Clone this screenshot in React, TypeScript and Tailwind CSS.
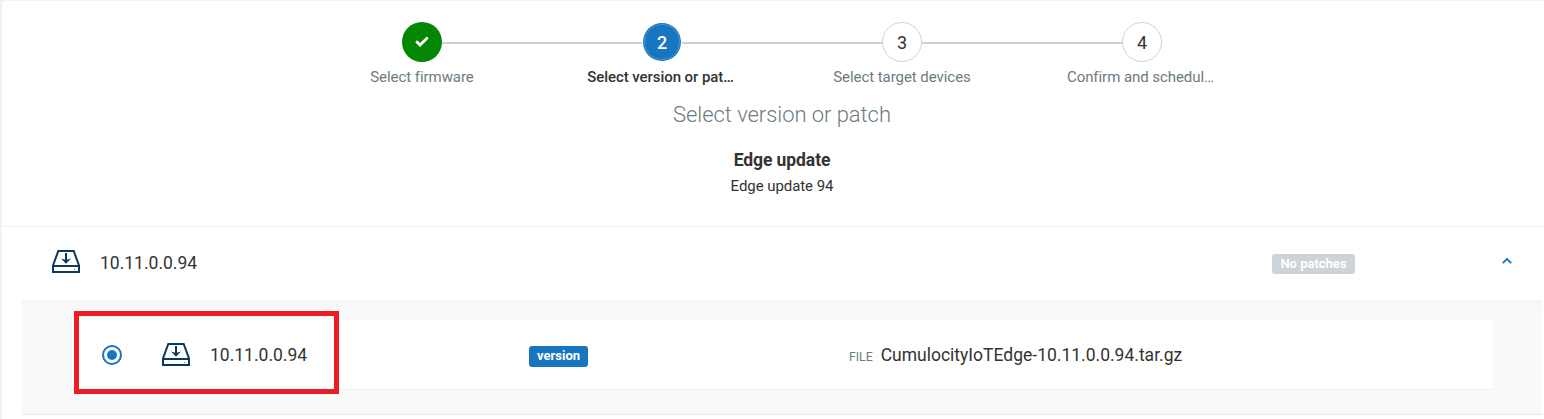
type StepState = "done" | "active" | "todo";

const steps: { label: string; state: StepState; clipped?: boolean }[] = [
  { label: "Select firmware", state: "done" },
  { label: "Select version or pat…", state: "active", clipped: true },
  { label: "Select target devices", state: "todo" },
  { label: "Confirm and schedul…", state: "todo", clipped: true },
];

function StepCircle({ index, state }: { index: number; state: StepState }) {
  if (state === "done") {
    return (
      <div className="flex size-10 items-center justify-center rounded-full bg-[#048804]">
        <svg className="h-3 w-[14px]" viewBox="0 0 14 12" fill="none">
          <path d="M1.2 5.3L5 9L12.7 1.5" stroke="white" strokeWidth="2.7" />
        </svg>
      </div>
    );
  }
  if (state === "active") {
    return (
      <div className="flex size-10 items-center justify-center rounded-full bg-white p-px">
        <div className="flex size-full items-center justify-center rounded-full bg-[#1776bf] p-px">
          <div className="flex size-full items-center justify-center rounded-full border border-[#4a94cf] text-[18px] font-medium text-white">
            {index}
          </div>
        </div>
      </div>
    );
  }
  return (
    <div className="flex size-10 items-center justify-center rounded-full border border-[#ced3d8] bg-white text-[18px] text-[#333]">
      {index}
    </div>
  );
}

function Stepper() {
  return (
    <ol className="mx-auto flex w-[960px]">
      {steps.map((step, i) => (
        <li key={step.label} className="flex w-60 flex-col items-center">
          <div className="flex w-full items-center">
            <div className={`mt-px h-0.5 flex-1 ${i > 0 ? "bg-[#ced3d8]" : ""}`} />
            <StepCircle index={i + 1} state={step.state} />
            <div className={`mt-px h-0.5 flex-1 ${i < steps.length - 1 ? "bg-[#ced3d8]" : ""}`} />
          </div>
          <span
            className={`mt-1 text-[15px] leading-[22px] ${step.clipped ? "pr-[3px]" : ""} ${
              step.state === "active"
                ? "font-medium tracking-[-0.06px] text-[#333]"
                : "tracking-[-0.06px] text-[#6c7b80]"
            }`}
          >
            {step.label}
          </span>
        </li>
      ))}
    </ol>
  );
}

function DriveIcon() {
  return (
    <svg className="h-[23px] w-7 shrink-0" viewBox="0 0 28 23" fill="none">
      <path d="M6.3 1H21.7L27 15.5V22H1V15.5Z" stroke="#0b385b" strokeWidth="2" />
      <path d="M1 16H27" stroke="#0b385b" strokeWidth="2" />
      <path d="M14 3V11" stroke="#0b385b" strokeWidth="2" />
      <path d="M9 8.5L14 10L19 8.5L14 13.7Z" fill="#0b385b" />
      <path d="M22 19.5H23" stroke="#0b385b" strokeOpacity="0.6" />
    </svg>
  );
}

export default function App() {
  return (
    <main className="flex h-[419px] w-full flex-col overflow-hidden bg-[#f1f2f3] pt-px pl-0.5 font-['Roboto',sans-serif] text-[#333]">
      <div className="flex h-full flex-col rounded-tl-[4px] bg-white">
        <header className="flex h-[226px] shrink-0 flex-col border-b border-[#f0f0f0] pt-[21px] pl-[18px]">
          <Stepper />
          <h1 className="mt-[11px] text-center text-[22px] leading-8 font-light tracking-[-0.06px] text-[#6c7b80]">
            Select version or patch
          </h1>
          <h2 className="mt-[17px] text-center text-[17.5px] leading-6 font-bold tracking-[-0.08px]">Edge update</h2>
          <p className="mt-[3px] text-center text-[15px] leading-[22px] tracking-[-0.06px]">Edge update 94</p>
        </header>
        <section className="flex h-[73px] shrink-0 items-center pb-[3px] pl-[50px]">
          <span className="pb-px">
            <DriveIcon />
          </span>
          <span className="mt-0.5 ml-5 w-[1172px] text-[17.5px]">10.11.0.0.94</span>
          <span className="mt-[3px] flex h-5 w-[83px] items-center justify-center rounded-[3px] bg-[#ced3d8] text-[13px] font-bold text-white">
            No patches
          </span>
          <svg className="mb-0.5 ml-[147px] h-2 w-[10px]" viewBox="0 0 10 8" fill="none">
            <path d="M.7 6.2L5 2L9.3 6.2" stroke="#1776bf" strokeWidth="1.8" />
          </svg>
        </section>
        <section className="mr-0.5 ml-5 flex h-[115px] shrink-0 flex-col border-b border-[#e8e8e8] bg-[linear-gradient(#f7f7f7,#fafafa_16px,#fafafa_98px,#f7f7f7)] pt-5 pr-[50px] pl-[50px]">
          <div className="relative flex h-[70px] items-center border-b border-[#f0f0f0] bg-white pl-[30px]">
            <span className="mt-px flex size-5 items-center justify-center rounded-full border-2 border-[#1776bf]">
              <span className="size-2.5 rounded-full bg-[#1776bf]" />
            </span>
            <span className="ml-10">
              <DriveIcon />
            </span>
            <span className="mt-0.5 ml-5 w-[319px] text-[17.5px]">10.11.0.0.94</span>
            <span className="mt-[3px] flex h-[21px] w-[59px] items-center justify-center rounded-[3px] bg-[#1776bf] text-[13px] font-bold text-white">
              version
            </span>
            <span className="mt-0.5 ml-[261px] flex items-baseline gap-2">
              <span className="text-[12.25px] text-[#6c7b80]">FILE</span>
              <span className="text-[17.5px]">CumulocityIoTEdge-10.11.0.0.94.tar.gz</span>
            </span>
            <div className="absolute -top-[9px] left-[2px] h-[83px] w-[265px] border-[5px] border-[#ed1c24]" />
          </div>
        </section>
      </div>
    </main>
  );
}
